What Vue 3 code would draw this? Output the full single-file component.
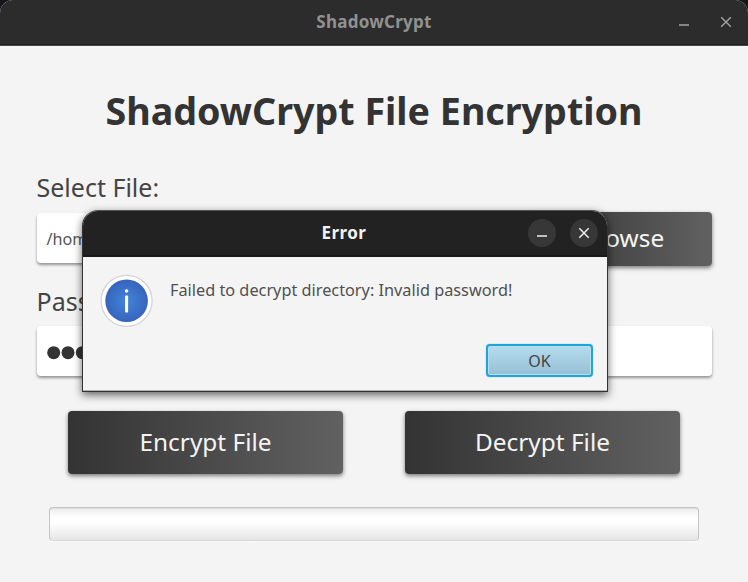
<script setup>
const path = '/home'
const dots = 6
</script>

<template>
  <div class="desktop">
    <div class="window">
      <header class="titlebar">
        <span class="win-title">ShadowCrypt</span>
        <div class="win-controls">
          <svg width="12" height="12" viewBox="0 0 12 12"><path d="M1 9h10" /></svg>
          <svg width="12" height="12" viewBox="0 0 12 12"><path d="M1.2 1.2l9.6 9.6M10.8 1.2l-9.6 9.6" /></svg>
        </div>
      </header>
      <main class="content">
        <h1>ShadowCrypt File Encryption</h1>
        <label class="label">Select File:</label>
        <div class="file-row">
          <div class="field path">{{ path }}</div>
          <button class="btn browse">Browse</button>
        </div>
        <label class="label pass-label">Password:</label>
        <div class="field password">
          <svg width="90" height="14" viewBox="0 0 90 14">
            <circle v-for="n in dots" :key="n" :cx="n * 14.3 - 7.6" cy="6.7" r="6.5" fill="#333" />
          </svg>
        </div>
        <div class="actions">
          <button class="btn action">Encrypt File</button>
          <button class="btn action">Decrypt File</button>
        </div>
        <div class="progress"></div>
      </main>
    </div>

    <section class="dialog">
      <header class="dlg-bar">
        <span class="dlg-title">Error</span>
        <div class="dlg-controls">
          <span class="round">
            <svg width="28" height="28" viewBox="0 0 28 28"><path d="M9 17h10" /></svg>
          </span>
          <span class="round">
            <svg width="28" height="28" viewBox="0 0 28 28"><path d="M9.3 9.3l9.4 9.4M18.7 9.3l-9.4 9.4" /></svg>
          </span>
        </div>
      </header>
      <div class="dlg-body">
        <svg class="info" width="54" height="54" viewBox="0 0 54 54">
          <defs>
            <radialGradient id="blue">
              <stop offset="0" stop-color="#4385d8" />
              <stop offset="1" stop-color="#3764bd" />
            </radialGradient>
          </defs>
          <circle cx="26.6" cy="26.8" r="25.5" fill="#fff" stroke="#d2d2d2" stroke-width="1.2" />
          <circle cx="26.6" cy="26.8" r="21.3" fill="url(#blue)" />
          <circle cx="26.6" cy="17" r="1.8" fill="#fff" />
          <rect x="25.1" y="21.5" width="3" height="17" rx=".7" fill="#fff" />
        </svg>
        <p class="message">Failed to decrypt directory: Invalid password!</p>
      </div>
      <footer class="dlg-footer"><button class="ok">OK</button></footer>
    </section>
  </div>
</template>

<style>
body { margin: 0; background: #15171a; }
</style>

<style scoped>
* { box-sizing: border-box; }
.desktop {
  position: relative;
  width: 748px;
  height: 582px;
  overflow: hidden;
  background: #15171a;
  font-family: "Noto Sans", sans-serif;
}
.window {
  height: 582px;
  border-radius: 13px 13px 0 0;
  overflow: hidden;
  background: #f4f4f4;
}
.titlebar {
  display: grid;
  grid-template-columns: 1fr auto 1fr;
  align-items: center;
  height: 46px;
  padding-bottom: 2px;
  background: #2c2c2c;
  border-bottom: 1px solid #4a4a4a;
  box-shadow: inset 0 -1px #202020;
}
.win-title {
  grid-column: 2;
  color: #919191;
  font-size: 17px;
  line-height: 24px;
  font-weight: 700;
  letter-spacing: .25px;
}
.win-controls {
  display: flex;
  justify-content: flex-end;
  gap: 30px;
  padding-right: 16px;
}
.win-controls svg { fill: none; stroke: #a4a4a4; stroke-width: 1.4; }
.content { padding: 0 36.5px; }
h1 {
  margin: 0;
  padding-top: 39px;
  color: #333;
  font-size: 37.65px;
  line-height: 52px;
  font-weight: 700;
  text-align: center;
  white-space: nowrap;
}
.label {
  display: block;
  margin-top: 34px;
  height: 34px;
  color: #444;
  font-size: 25px;
  line-height: 33px;
}
.file-row {
  display: flex;
  align-items: flex-start;
  gap: 13px;
  margin-top: 7px;
}
.field {
  height: 50.4px;
  border-radius: 4px;
  background: #fff;
  box-shadow: 0 2px 3px rgba(0, 0, 0, .4);
}
.path {
  flex: 1;
  margin-top: 1px;
  padding-left: 10px;
  color: #555;
  font-size: 16.2px;
  line-height: 52px;
}
.btn {
  border: 0;
  padding: 0;
  border-radius: 4px;
  background: linear-gradient(90deg, #333, #616161);
  box-shadow: 0 2px 4px rgba(0, 0, 0, .5);
  color: #f4f4f4;
  font-family: inherit;
  font-size: 24.4px;
  text-align: center;
}
.browse { width: 179px; height: 53.5px; margin-bottom: .5px; padding-bottom: 2px; line-height: 50px; }
.pass-label { margin-top: 19px; }
.password {
  display: flex;
  align-items: center;
  margin-top: 7px;
  padding: 3px 0 0 10px;
}
.actions {
  display: flex;
  justify-content: center;
  gap: 62px;
  margin-top: 34.6px;
}
.action { width: 275px; height: 63.5px; padding-bottom: 2px; line-height: 60px; }
.progress {
  height: 34px;
  margin: 32.5px 12.5px 0;
  border: 1px solid #c4c4c4;
  border-bottom-color: #d8d8d8;
  border-radius: 4px;
  background: linear-gradient(#ececec, #fff 30%, #fff 45%, #e5e5e5);
  box-shadow: inset 0 1px #e0e0e0, 0 1px #fafafa;
}
.dialog {
  position: absolute;
  left: 81.5px;
  top: 209.5px;
  width: 526px;
  height: 182.5px;
  border: 1px solid #333;
  border-top-color: #555;
  border-radius: 16px 16px 0 0;
  overflow: hidden;
  background: #f4f4f4;
  box-shadow: 0 3px 9px rgba(0, 0, 0, .6), inset 0 -1px #b4b4b4;
}
.dlg-bar {
  display: grid;
  grid-template-columns: 1fr auto 1fr;
  align-items: center;
  height: 46px;
  background: #222;
  border-bottom: 2px solid #191919;
}
.dlg-title {
  grid-column: 2;
  padding: 1px 1px 0 0;
  color: #f2f2f2;
  font-size: 17px;
  line-height: 24px;
  font-weight: 700;
  letter-spacing: .45px;
}
.dlg-controls { display: flex; justify-content: flex-end; gap: 14px; padding: 1px 9px 0 0; }
.round { width: 28px; height: 28px; border-radius: 50%; background: #373737; }
.round svg { display: block; fill: none; stroke: #eee; stroke-width: 1.5; }
.dlg-body { display: flex; height: 87px; padding: 17px 0 0 17px; }
.info { flex: none; }
.message {
  margin: 4px 0 0 16.5px;
  color: #505050;
  font-size: 16.3px;
  line-height: 24px;
  white-space: nowrap;
}
.dlg-footer { display: flex; justify-content: flex-end; padding-right: 13.5px; }
.ok {
  width: 107px;
  height: 33px;
  padding: 0;
  border: 2px solid #1fa5d8;
  border-radius: 4px;
  background: linear-gradient(#b5dcee, #97c0d6);
  box-shadow: 0 0 1px #1fa5d8, inset 0 0 0 1px #b9deed;
  color: #444;
  font-family: inherit;
  font-size: 16px;
  line-height: 30px;
}
</style>
